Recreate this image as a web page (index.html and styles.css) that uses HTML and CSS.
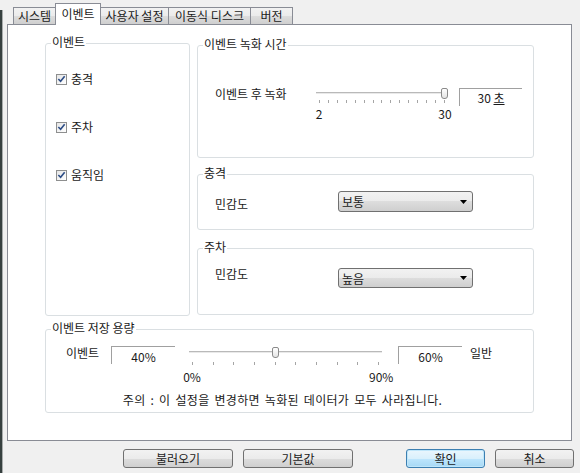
FILE: index.html
```html
<!DOCTYPE html>
<html>
<head>
    <title>이벤트 설정</title>
    <link rel="stylesheet" href="styles.css">
</head>
<body>
    <div class="tabs">
        <div class="tab tab-system">시스템</div>
        <div class="tab tab-event active">이벤트</div>
        <div class="tab tab-user">사용자 설정</div>
        <div class="tab tab-disk">이동식 디스크</div>
        <div class="tab tab-version">버전</div>
    </div>

    <div class="panel">
        <div class="layout">
            <!-- left: event types -->
            <div class="group group-events">
                <span class="legend">이벤트</span>
                <div class="check-list">
                    <div class="check-row">
                        <span class="checkbox"><svg width="10" height="10" viewBox="0 0 10 10"><path d="M1.5 5 L4 7.5 L8.5 2" fill="none" stroke="#2d4d86" stroke-width="1.8"/></svg></span>
                        <span>충격</span>
                    </div>
                    <div class="check-row">
                        <span class="checkbox"><svg width="10" height="10" viewBox="0 0 10 10"><path d="M1.5 5 L4 7.5 L8.5 2" fill="none" stroke="#2d4d86" stroke-width="1.8"/></svg></span>
                        <span>주차</span>
                    </div>
                    <div class="check-row">
                        <span class="checkbox"><svg width="10" height="10" viewBox="0 0 10 10"><path d="M1.5 5 L4 7.5 L8.5 2" fill="none" stroke="#2d4d86" stroke-width="1.8"/></svg></span>
                        <span>움직임</span>
                    </div>
                </div>
            </div>

            <!-- right column -->
            <div class="right-col">
                <div class="group group-rec">
                    <span class="legend">이벤트 녹화 시간</span>
                    <div class="rec-row">
                        <span class="rec-label">이벤트 후 녹화</span>
                        <div class="slider slider-rec">
                            <div class="track-area">
                                <div class="track"></div>
                                <div class="thumb" style="left: 125px"></div>
                            </div>
                            <div class="ticks" id="recTicks"></div>
                            <div class="tick-labels">
                                <span>2</span>
                                <span>30</span>
                            </div>
                        </div>
                        <div class="static-box box-rec">30 <u>초</u></div>
                    </div>
                </div>

                <div class="group group-shock">
                    <span class="legend">충격</span>
                    <div class="combo-row">
                        <span class="combo-label">민감도</span>
                        <div class="combo">
                            <span>보통</span>
                            <svg width="7" height="4" viewBox="0 0 7 4"><path d="M0 0h7l-3.5 4z" fill="#000"/></svg>
                        </div>
                    </div>
                </div>

                <div class="group group-park">
                    <span class="legend">주차</span>
                    <div class="combo-row park-row">
                        <span class="combo-label">민감도</span>
                        <div class="combo">
                            <span>높음</span>
                            <svg width="7" height="4" viewBox="0 0 7 4"><path d="M0 0h7l-3.5 4z" fill="#000"/></svg>
                        </div>
                    </div>
                </div>
            </div>

            <!-- bottom: storage -->
            <div class="group group-storage">
                <span class="legend">이벤트 저장 용량</span>
                <div class="storage-row">
                    <span class="storage-label">이벤트</span>
                    <div class="static-box box-pct">40%</div>
                    <div class="slider slider-storage">
                        <div class="track-area">
                            <div class="track"></div>
                            <div class="thumb" style="left: 83px"></div>
                        </div>
                        <div class="ticks" id="storageTicks"></div>
                        <div class="tick-labels">
                            <span>0%</span>
                            <span>90%</span>
                        </div>
                    </div>
                    <div class="static-box box-pct box-normal">60%</div>
                    <span class="normal-label">일반</span>
                </div>
                <p class="note">주의 : 이 설정을 변경하면 녹화된 데이터가 모두 사라집니다.</p>
            </div>
        </div>
    </div>

    <div class="buttons">
        <button class="btn btn-wide">불러오기</button>
        <button class="btn btn-wide btn-gap">기본값</button>
        <button class="btn btn-ok">확인</button>
        <button class="btn btn-cancel">취소</button>
    </div>

    <script>
        function fillTicks(id, count) {
            let box = document.getElementById(id);
            for (let i = 0; i < count; i++) {
                let t = document.createElement('span');
                t.className = 'tick';
                box.appendChild(t);
            }
        }

        fillTicks('recTicks', 15);
        fillTicks('storageTicks', 10);
    </script>
</body>
</html>
```

FILE: styles.css
```css
body {
    margin: 0;
    width: 580px;
    height: 473px;
    overflow: hidden;
    font-family: "Noto Sans CJK KR", "Noto Sans", sans-serif;
    font-size: 12px;
    color: #1a1a1a;
    background:
        linear-gradient(#f0f0f0, #f0f0f0) top left / 100% 10px no-repeat,
        linear-gradient(to right, #36403f 0, #36403f 2px, #a8acac 2px, #a8acac 3px, #f0f0f0 3px);
}

/* tabs */
.tabs {
    display: flex;
    align-items: flex-end;
    height: 24px;
    padding-left: 13px;
    box-sizing: border-box;
}

.tab {
    height: 17px;
    box-sizing: border-box;
    border: 1px solid #898c95;
    border-bottom: none;
    margin-left: -1px;
    text-align: center;
    line-height: 15px;
    background: linear-gradient(#f2f2f2, #ebebeb 50%, #dddddd 50%, #cfcfcf);
    white-space: nowrap;
}

.tab:first-child {
    margin-left: 0;
}

.tab-system { width: 43px; }
.tab-event { width: 46px; }
.tab-user { width: 69px; }
.tab-disk { width: 83px; }
.tab-version { width: 43px; }

.tab.active {
    height: 22px;
    margin-bottom: -1px;
    background: #fff;
    line-height: 19px;
    position: relative;
    z-index: 1;
}

/* panel */
.panel {
    margin-left: 7px;
    width: 565px;
    height: 417px;
    box-sizing: border-box;
    border: 1px solid #898c95;
    background: #fff;
    padding: 18px 0 0 37px;
}

.layout {
    display: grid;
    grid-template-columns: 145px 337px;
    column-gap: 7px;
    row-gap: 13px;
}

.group {
    position: relative;
    box-sizing: border-box;
    border: 1px solid #dadfe2;
    border-radius: 3px;
}

.legend {
    position: absolute;
    top: -9px;
    left: 5px;
    padding: 0 1px;
    background: #fff;
    line-height: 14px;
    white-space: nowrap;
}

/* left group */
.group-events {
    height: 273px;
}

.check-list {
    display: flex;
    flex-direction: column;
    gap: 34px;
    padding: 28px 0 0 10px;
}

.check-row {
    display: flex;
    align-items: center;
    gap: 4px;
    line-height: 14px;
}

.checkbox {
    width: 11px;
    height: 11px;
    box-sizing: border-box;
    border: 1px solid #8e8f8f;
    background: linear-gradient(135deg, #e6e6e6, #ffffff);
    display: flex;
    align-items: center;
    justify-content: center;
}

/* right column */
.right-col {
    display: flex;
    flex-direction: column;
}

.group-rec {
    margin-top: 2px;
    height: 113px;
}

.group-shock {
    margin-top: 16px;
    height: 56px;
}

.group-park {
    margin-top: 18px;
    height: 67px;
}

.rec-row {
    display: flex;
    align-items: flex-start;
    padding: 41px 0 0 17px;
}

.rec-label {
    flex: 0 0 101px;
    line-height: 14px;
}

/* sliders */
.slider {
    margin-top: 1px;
}

.slider-rec {
    width: 132px;
}

.track-area {
    position: relative;
    height: 11px;
}

.track {
    position: relative;
    top: 4px;
    height: 1px;
    background: #b9b9b9;
    border-bottom: 1px solid #e9e9e9;
}

.thumb {
    position: absolute;
    top: 0;
    width: 7px;
    height: 11px;
    box-sizing: border-box;
    border: 1px solid #8a8a8a;
    border-radius: 2px 2px 3px 3px;
    background: linear-gradient(#ffffff, #e4e4e4);
}

.ticks {
    display: flex;
    justify-content: space-between;
    padding: 0 3px;
    margin-top: 1px;
    height: 3px;
}

.tick {
    width: 1px;
    height: 3px;
    background: #a5a5a5;
}

.tick-labels {
    display: flex;
    justify-content: space-between;
    margin: 5px -7px 0;
    line-height: 12px;
}

.tick-labels span {
    width: 20px;
    text-align: center;
}

.static-box {
    box-sizing: border-box;
    height: 18px;
    border-top: 1px solid #a0a0a0;
    border-left: 1px solid #a0a0a0;
    text-align: center;
    line-height: 17px;
    white-space: nowrap;
}

.box-rec {
    width: 63px;
    margin: 1px 0 0 11px;
}

/* combos */
.combo-row {
    display: flex;
    align-items: flex-start;
    padding: 16px 0 0 17px;
}

.park-row {
    padding-top: 18px;
}

.combo-label {
    flex: 0 0 123px;
    line-height: 14px;
    margin-top: 6px;
}

.park-row .combo-label {
    margin-top: 0;
}

.combo {
    width: 135px;
    height: 21px;
    box-sizing: border-box;
    border: 1px solid #707070;
    border-radius: 3px;
    background: linear-gradient(#f2f2f2, #ebebeb 50%, #dddddd 50%, #cfcfcf);
    display: flex;
    align-items: center;
    justify-content: space-between;
    padding: 0 5px 0 3px;
}

.park-row .combo {
    margin-top: 1px;
    height: 20px;
}

/* storage group */
.group-storage {
    grid-column: 1 / 3;
    height: 84px;
}

.storage-row {
    display: flex;
    align-items: flex-start;
    padding: 15px 0 0 20px;
}

.storage-label {
    flex: 0 0 45px;
    margin-top: 1px;
    line-height: 14px;
}

.box-pct {
    width: 64px;
    margin-top: 1px;
    line-height: 19px;
}

.slider-storage {
    width: 193px;
    margin: 2px 0 0 14px;
}

.slider-storage .ticks {
    margin-top: 4px;
}

.slider-storage .tick-labels {
    margin-top: 6px;
}

.box-normal {
    margin-left: 16px;
}

.normal-label {
    margin: 1px 0 0 8px;
    line-height: 14px;
}

.note {
    margin: 10px 0 0;
    padding-right: 14px;
    text-align: center;
    line-height: 14px;
    letter-spacing: 0.3px;
    word-spacing: 2px;
}

/* dialog buttons */
.buttons {
    display: flex;
    padding: 8px 0 0 123px;
}

.btn {
    height: 19px;
    box-sizing: border-box;
    padding: 0;
    border: 1px solid #707070;
    border-radius: 3px;
    background: linear-gradient(#f2f2f2, #ebebeb 50%, #dddddd 50%, #cfcfcf);
    font-family: inherit;
    font-size: 12px;
    line-height: 16px;
    color: #1a1a1a;
}

.btn-wide {
    width: 110px;
}

.btn-gap {
    margin-left: 10px;
}

.btn-ok {
    width: 79px;
    margin-left: 53px;
    border-color: #3c7fb1;
    background: linear-gradient(#eaf6fd, #d9f0fc 50%, #bee6fd 50%, #a7d9f5);
    box-shadow: inset 0 0 0 1px #bfe6fa;
}

.btn-cancel {
    width: 79px;
    margin-left: 10px;
}
```
